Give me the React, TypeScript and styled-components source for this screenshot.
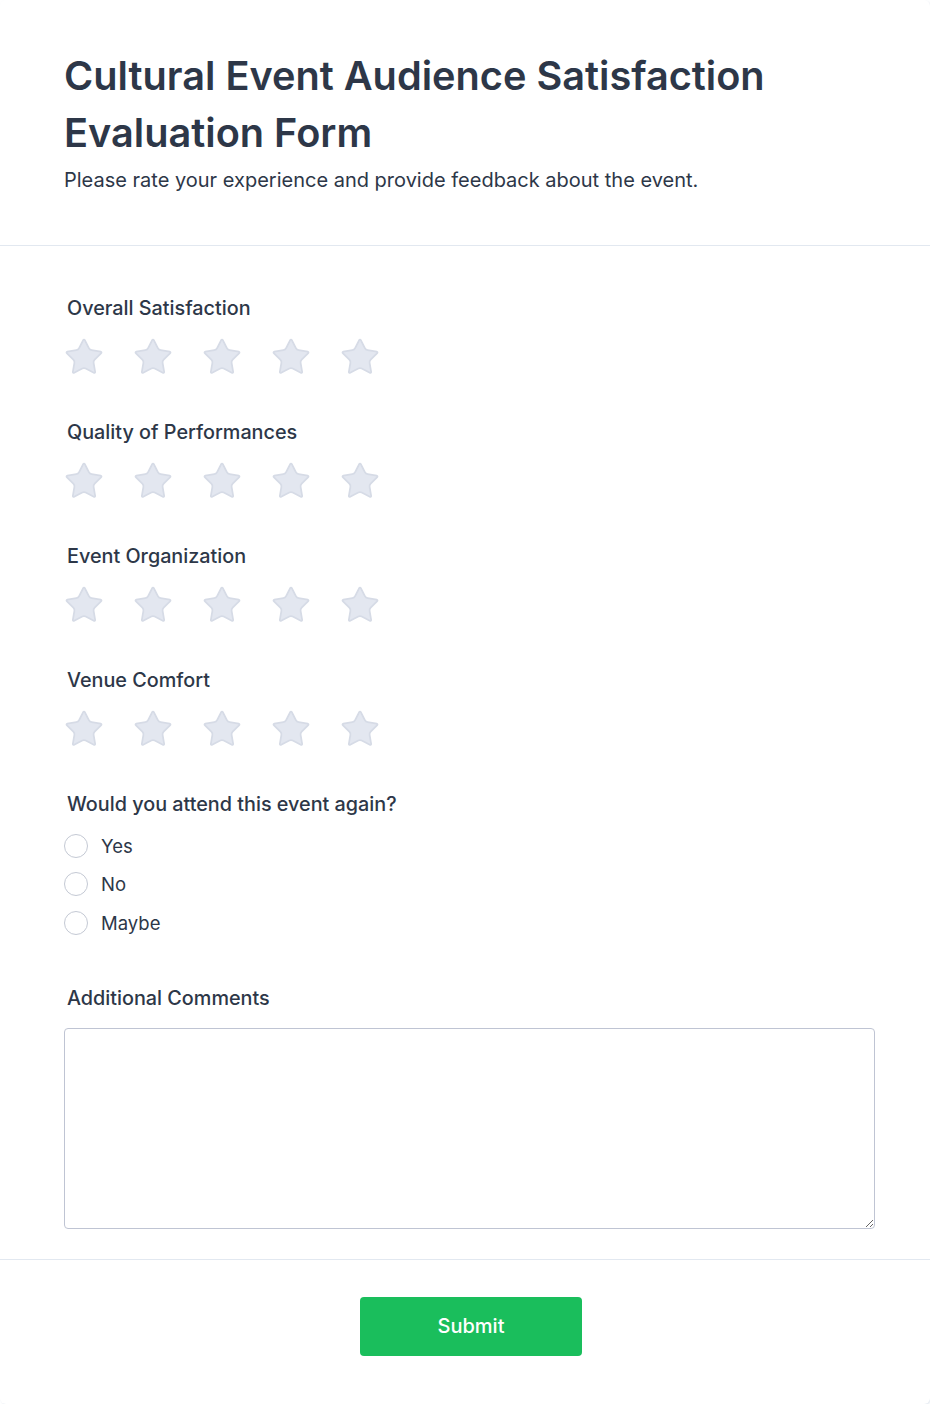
import styled, { createGlobalStyle } from 'styled-components'
import { Star } from 'lucide-react'

const GlobalStyle = createGlobalStyle`
  html, body {
    margin: 0;
    padding: 0;
    background: #ffffff;
    font-family: Inter, 'Noto Sans', sans-serif;
    color: #2d3748;
  }
  * {
    box-sizing: border-box;
  }
`

const Card = styled.div`
  display: flex;
  flex-direction: column;
  background: #ffffff;
  border-radius: 6px;
  box-shadow: 1px 1px 2px rgba(226, 232, 240, 0.9);
  min-height: 1403px;
`

const Header = styled.header`
  padding: 48px 55px 50px 64px;
  border-bottom: 1px solid #e2e8f0;
`

const Title = styled.h1`
  margin: 0;
  font-size: 39.7px;
  line-height: 57px;
  font-weight: 600;
  color: #2d3748;
`

const Subtitle = styled.p`
  margin: 3px 0 0;
  font-size: 20px;
  line-height: 30px;
  color: #2d3748;
`

const Body = styled.div`
  display: flex;
  flex-direction: column;
  gap: 41px;
  padding: 47px 55px 30px 64px;
  border-bottom: 1px solid #e2e8f0;
`

const Field = styled.section`
  display: flex;
  flex-direction: column;
  gap: 15px;
`

const Label = styled.label`
  padding-left: 3px;
  font-size: 19.8px;
  line-height: 30px;
  font-weight: 500;
  color: #2d3748;
`

const StarRow = styled.div`
  display: flex;
  gap: 27px;
  height: 38px;
  align-items: center;
  margin-left: -1px;
`

const StarButton = styled.button`
  display: flex;
  padding: 0;
  border: none;
  background: none;
  cursor: pointer;
`

const Options = styled.div`
  display: flex;
  flex-direction: column;
  gap: 11.5px;
  margin-top: -2px;
  margin-bottom: 5.5px;
`

const Option = styled.label`
  display: flex;
  align-items: center;
  gap: 13px;
  height: 27px;
  font-size: 18.5px;
  color: #2d3748;
  cursor: pointer;
`

const RadioCircle = styled.span`
  width: 24px;
  height: 24px;
  border-radius: 50%;
  border: 1.5px solid #c4c9d4;
  background: #ffffff;
`

const TextArea = styled.textarea`
  display: block;
  width: 100%;
  height: 201px;
  border: 1.5px solid #bfc4d3;
  border-radius: 4px;
  resize: vertical;
  font-family: inherit;
  font-size: 16px;
  padding: 8px 12px;
  outline: none;
`

const Footer = styled.footer`
  display: flex;
  justify-content: center;
  padding: 37px 55px 48px 64px;
`

const SubmitButton = styled.button`
  width: 222px;
  height: 59px;
  margin-left: 3px;
  border: none;
  border-radius: 4px;
  background: #1abe5c;
  color: #ffffff;
  font-family: inherit;
  font-size: 20px;
  font-weight: 500;
  cursor: pointer;
`

const ratings = [
  'Overall Satisfaction',
  'Quality of Performances',
  'Event Organization',
  'Venue Comfort',
]

const answers = ['Yes', 'No', 'Maybe']

export default function App() {
  return (
    <>
      <GlobalStyle />
      <Card>
        <Header>
          <Title>Cultural Event Audience Satisfaction Evaluation Form</Title>
          <Subtitle>Please rate your experience and provide feedback about the event.</Subtitle>
        </Header>
        <Body>
          {ratings.map((name) => (
            <Field key={name}>
              <Label>{name}</Label>
              <StarRow>
                {[1, 2, 3, 4, 5].map((n) => (
                  <StarButton key={n} type="button" aria-label={`${n} star`}>
                    <Star size={42} fill="#e3e7f0" color="#d6dbe6" strokeWidth={1} />
                  </StarButton>
                ))}
              </StarRow>
            </Field>
          ))}
          <Field>
            <Label>Would you attend this event again?</Label>
            <Options>
              {answers.map((a) => (
                <Option key={a}>
                  <RadioCircle />
                  {a}
                </Option>
              ))}
            </Options>
          </Field>
          <Field>
            <Label>Additional Comments</Label>
            <TextArea />
          </Field>
        </Body>
        <Footer>
          <SubmitButton type="button">Submit</SubmitButton>
        </Footer>
      </Card>
    </>
  )
}
